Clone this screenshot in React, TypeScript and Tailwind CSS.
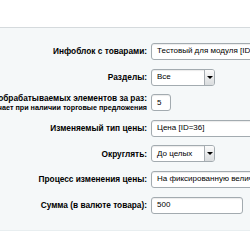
import React from 'react';

const Arrow: React.FC = () => (
  <span className="ml-auto flex h-full w-[10px] items-center justify-center border-l border-[#a8aeb3] bg-gradient-to-b from-[#fbfbfb] to-[#d9dcde]">
    <span className="h-0 w-0 border-x-[3px] border-t-[3px] border-x-transparent border-t-black" />
  </span>
);

const Field: React.FC<{ value: string; w: string; select?: boolean }> = ({ value, w, select }) => (
  <div
    className={`flex h-[17px] shrink-0 items-center overflow-hidden rounded-[3px] border border-[#a3abb0] bg-white pl-[5px] text-[8px] text-black shadow-[inset_0_1px_1px_rgba(0,0,0,0.08)] ${w}`}
  >
    <span className="whitespace-nowrap">{value}</span>
    {select && <Arrow />}
  </div>
);

const rows = [
  { label: 'Инфоблок с товарами:', value: 'Тестовый для модуля [ID=2]', w: 'w-[120px]', h: 'h-[26px]' },
  { label: 'Разделы:', value: 'Все', w: 'w-[64px]', h: 'h-[26px]', select: true },
  { label: 'Количество обрабатываемых элементов за раз:', sub: 'Шаг отключает при наличии торговые предложения', value: '5', w: 'w-[20px]', h: 'h-[25px]' },
  { label: 'Изменяемый тип цены:', value: 'Цена [ID=36]', w: 'w-[120px]', h: 'h-[26px]' },
  { label: 'Округлять:', value: 'До целых', w: 'w-[64px]', h: 'h-[25px]', select: true },
  { label: 'Процесс изменения цены:', value: 'На фиксированную величину', w: 'w-[120px]', h: 'h-[26px]' },
  { label: 'Сумма (в валюте товара):', value: '500', w: 'w-[92px]', h: 'h-[26px]' },
];

const App: React.FC = () => {
  return (
    <div className="h-[250px] w-[250px] overflow-hidden bg-white font-['Liberation_Sans',Arial,sans-serif]">
      <div className="h-[27px]" />
      <div className="border-t border-b border-t-[#d5dadd] border-b-[#e8eef0] bg-[#f5f8f9] pt-[10px] pb-[12px]">
        {rows.map((r) => (
          <div key={r.label} className={`flex items-center ${r.h}`}>
            <div className="flex w-[147px] shrink-0 flex-col items-end">
              <span className="whitespace-nowrap text-[8.3px] font-bold leading-[10px] text-black">{r.label}</span>
              {r.sub && (
                <span className="whitespace-nowrap text-[7.2px] font-bold leading-[9px] text-black">{r.sub}</span>
              )}
            </div>
            <div className="ml-[4px] flex">
              <Field value={r.value} w={r.w} select={r.select} />
            </div>
          </div>
        ))}
      </div>
    </div>
  );
};

export default App;
